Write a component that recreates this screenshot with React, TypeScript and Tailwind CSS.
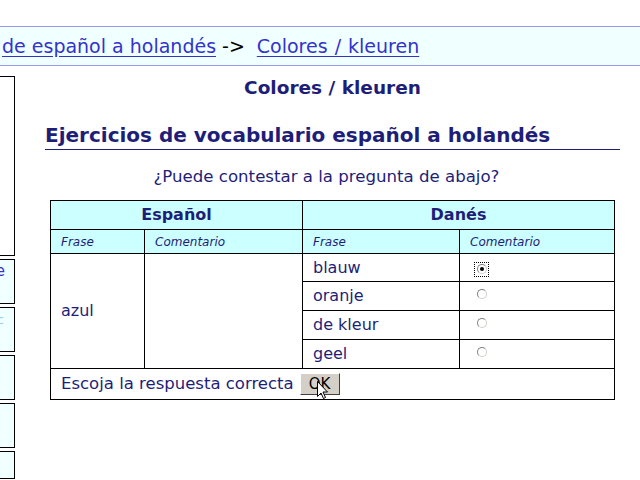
import React from "react";

const navy = "text-[#1e1e78]";

function Radio({ checked }: { checked?: boolean }) {
  return (
    <span className={checked ? "inline-flex items-center justify-center w-[13px] h-[13px] outline-1 outline-dotted outline-black" : "inline-flex items-center justify-center w-[13px] h-[13px]"}>
      <span className="relative w-[10px] h-[10px] rounded-full border border-t-[#808080] border-l-[#808080] border-r-[#d4d0c8] border-b-[#d4d0c8] bg-white flex items-center justify-center">
        {checked && <span className="w-[4px] h-[4px] rounded-full bg-black" />}
      </span>
    </span>
  );
}

function Cursor() {
  return (
    <svg width="12" height="19" viewBox="0 0 12 19" className="absolute left-[317px] top-[381px]">
      <path d="M0.5 0.5 L0.5 15.5 L4 12 L6.5 17.5 L8.5 16.5 L6 11 L10.5 11 Z" fill="white" stroke="black" strokeWidth="1" />
    </svg>
  );
}

export default function App() {
  const rows = [
    { w: "blauw", c: true, h: "h-[28px]" },
    { w: "oranje", h: "h-[29px]" },
    { w: "de kleur", h: "h-[29px]" },
    { w: "geel", h: "h-[29px]" },
  ];
  return (
    <div className="relative w-[640px] h-[480px] overflow-hidden bg-white" style={{ fontFamily: '"DejaVu Sans", Verdana, sans-serif' }}>
      <div className="h-[26px]" />
      <div className="h-[40px] bg-[#f0ffff] border-t border-b border-[#9999ee] flex items-center pl-[2px] text-[19px] whitespace-nowrap">
        <span className="text-[#3333cc] underline underline-offset-[3px]">de español a holandés</span>
        <span className="text-black ml-[6px] mr-[12px]">-&gt;</span>
        <span className="text-[#3333cc] underline underline-offset-[3px] [word-spacing:1px]">Colores / kleuren</span>
      </div>
      <div className="flex">
        <div className="w-[15px] shrink-0 flex flex-col gap-[3px] pt-[10px]">
          <div className="h-[180px] border border-l-0 border-black bg-white" />
          <div className="h-[45px] border border-l-0 border-black bg-[#f0ffff] overflow-hidden relative">
            <span className="absolute right-[9px] top-[4px] text-[15px] text-[#3333cc] leading-none">e</span>
          </div>
          <div className="h-[45px] border border-l-0 border-black bg-[#f0ffff] overflow-hidden relative">
            <span className="absolute right-[10px] top-[5px] text-[13px] text-[#99ccff] leading-none">c</span>
          </div>
          <div className="h-[45px] border border-l-0 border-black bg-[#f0ffff]" />
          <div className="h-[45px] border border-l-0 border-black bg-[#f0ffff]" />
          <div className="h-[28px] border border-l-0 border-black bg-[#f0ffff]" />
          <div className="h-[20px] border border-l-0 border-black bg-[#f0ffff]" />
        </div>
        <div className={`ml-[30px] w-[575px] ${navy}`}>
          <div className="text-center font-bold text-[18.5px] mt-[10px] leading-[23px]">Colores / kleuren</div>
          <div className="mt-[23px] font-bold text-[20px] leading-[26px] border-b border-[#1e1e78] pb-[1px]">
            Ejercicios de vocabulario español a holandés
          </div>
          <div className="text-center text-[16.6px] mt-[16px] leading-[22px] pr-[12px]">¿Puede contestar a la pregunta de abajo?</div>
          <table className="mt-[12px] ml-[5px] w-[565px] border-collapse border border-black">
            <colgroup>
              <col className="w-[94px]" />
              <col className="w-[158px]" />
              <col className="w-[157px]" />
              <col className="w-[155px]" />
            </colgroup>
            <tbody>
              <tr className="bg-[#ccffff] h-[29px]">
                <th colSpan={2} className="border border-black text-[16px] font-bold leading-[20px] p-0">Español</th>
                <th colSpan={2} className="border border-black text-[16px] font-bold leading-[20px] p-0">Danés</th>
              </tr>
              <tr className="bg-[#ccffff] h-[24px]">
                <td className="border border-black text-[12px] italic px-[10px] text-left leading-[16px]">Frase</td>
                <td className="border border-black text-[12px] italic px-[10px] text-left leading-[16px]">Comentario</td>
                <td className="border border-black text-[12px] italic px-[10px] text-left leading-[16px]">Frase</td>
                <td className="border border-black text-[12px] italic px-[10px] text-left leading-[16px]">Comentario</td>
              </tr>
              {rows.map((r, i) => (
                <tr key={r.w} className={r.h}>
                  {i === 0 && (
                    <>
                      <td rowSpan={4} className="border border-black text-[16px] px-[10px] align-middle">azul</td>
                      <td rowSpan={4} className="border border-black" />
                    </>
                  )}
                  <td className="border border-black text-[16px] px-[10px] leading-[20px] p-0 pl-[10px]">{r.w}</td>
                  <td className="border border-black px-[15px] align-top pt-[4px] leading-none">
                    <Radio checked={r.c} />
                  </td>
                </tr>
              ))}
              <tr className="h-[31px]">
                <td colSpan={4} className="border border-black px-[10px] text-[16.5px] p-0 pl-[10px]">
                  <div className="flex items-center">
                    <span>Escoja la respuesta correcta</span>
                    <button className="ml-[6px] w-[40px] h-[22px] bg-[#d4d0c8] border border-t-white border-l-white border-r-[#404040] border-b-[#404040] text-black text-[15px] leading-none">OK</button>
                  </div>
                </td>
              </tr>
            </tbody>
          </table>
        </div>
      </div>
      <Cursor />
    </div>
  );
}
